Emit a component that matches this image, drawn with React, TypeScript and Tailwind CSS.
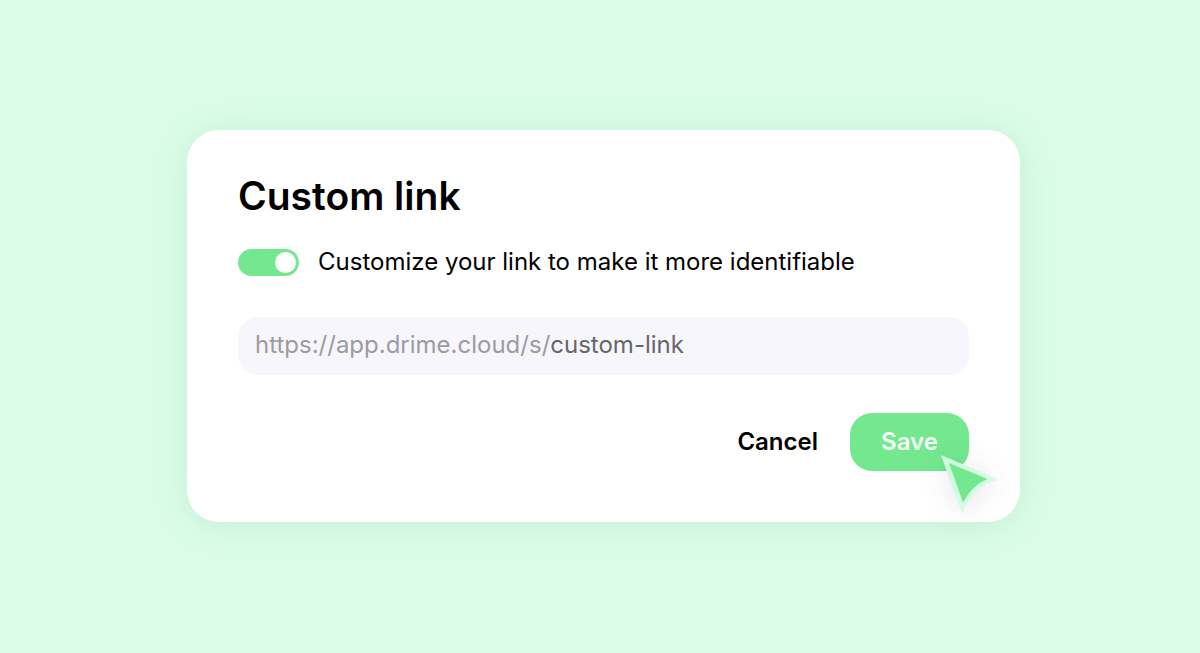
import { useState } from "react";

function Toggle({ id, checked, onChange }: { id: string; checked: boolean; onChange: (v: boolean) => void }) {
  return (
    <span className="relative flex h-[27px] w-[61px] shrink-0">
      <input
        id={id}
        type="checkbox"
        checked={checked}
        onChange={(e) => onChange(e.target.checked)}
        className="peer h-full w-full cursor-pointer appearance-none rounded-full bg-gray-300 checked:bg-[#73e88f]"
      />
      <span className="pointer-events-none absolute top-[3px] left-[3px] size-[21px] rounded-full bg-white peer-checked:right-[3px] peer-checked:left-auto" />
    </span>
  );
}

function Pointer() {
  return (
    <svg
      aria-hidden="true"
      viewBox="0 0 60 60"
      className="pointer-events-none absolute top-[41px] left-[90px] size-[60px] overflow-visible drop-shadow-[0_3px_14px_rgba(40,40,70,0.12)]"
    >
      <defs>
        <linearGradient id="pointer-rim" x1="0" y1="0" x2="1" y2="1">
          <stop offset="0.2" stopColor="#cdfbdb" />
          <stop offset="0.75" stopColor="#dcfbe6" />
        </linearGradient>
      </defs>
      <path d="M1 1 L58.500 25.500 Q34 32 22 59.500 Z" fill="url(#pointer-rim)" />
      <path d="M9 9 L47.500 25 Q32 31 23 48.500 Z" fill="#73e88f" />
    </svg>
  );
}

export default function App() {
  const [enabled, setEnabled] = useState(true);
  const [slug, setSlug] = useState("custom-link");

  return (
    <main className="flex min-h-screen items-center justify-center bg-[#dbfde8] pb-[2px] pl-[7px] font-['Inter',sans-serif] text-black">
      <form
        onSubmit={(e) => e.preventDefault()}
        className="w-full max-w-[833px] rounded-[32px] bg-white px-[51px] pt-[46px] pb-[51px] shadow-[0_3px_34px_rgba(60,150,95,0.14)]"
      >
        <h1 className="text-[39px] leading-[40px] font-semibold">Custom link</h1>
        <div className="mt-[33px] flex items-center gap-[19px]">
          <Toggle id="customize" checked={enabled} onChange={setEnabled} />
          <label htmlFor="customize" className="pb-[2px] text-[24px] leading-[25px]">
            Customize your link to make it more identifiable
          </label>
        </div>
        <div className="mt-[41px] flex h-[58px] items-center rounded-[20px] bg-[#f7f6fd] px-[17px] pb-[2px] text-[24px] leading-8">
          <label htmlFor="slug" className="text-[#9c9c9e]">
            https://app.drime.cloud/s/
          </label>
          <input
            id="slug"
            type="text"
            value={slug}
            disabled={!enabled}
            onChange={(e) => setSlug(e.target.value)}
            className="min-w-0 flex-1 bg-transparent text-[#66666a] outline-none"
          />
        </div>
        <div className="mt-[38px] flex items-center justify-end gap-8 text-[24px] leading-8 font-semibold">
          <button type="button">Cancel</button>
          <div className="relative">
            <button type="submit" className="h-[58px] w-[119px] rounded-[22px] bg-[#73e88f] text-[#f3fff6]">
              Save
            </button>
            <Pointer />
          </div>
        </div>
      </form>
    </main>
  );
}
